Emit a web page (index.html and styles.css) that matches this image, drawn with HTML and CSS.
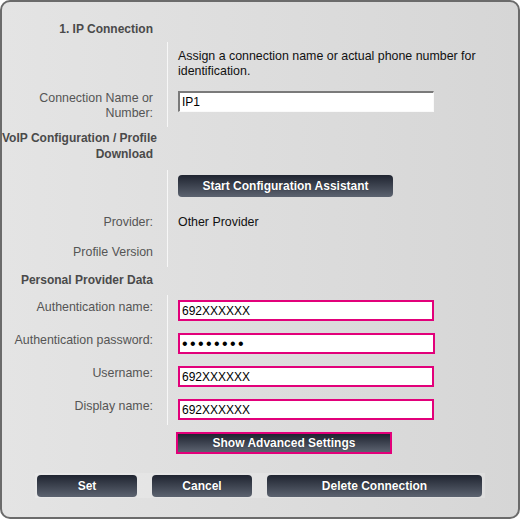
FILE: index.html
```html
<!DOCTYPE html>
<html lang="en">
<head>
    <meta charset="UTF-8">
    <title>IP Connection</title>
    <link rel="stylesheet" href="styles.css">
</head>
<body>
<div class="panel">
    <div class="row head first">
        <div class="label">1. IP Connection</div>
        <div class="field"></div>
    </div>
    <div class="row desc">
        <div class="label"></div>
        <div class="field line">Assign a connection name or actual phone number for identification.</div>
    </div>
    <div class="row name">
        <div class="label">Connection Name or<br>Number:</div>
        <div class="field line"><input class="plain" type="text" value="IP1"></div>
    </div>
    <div class="row head voip">
        <div class="label">VoIP Configuration / Profile<br>Download</div>
        <div class="field"></div>
    </div>
    <div class="row assist">
        <div class="label"></div>
        <div class="field line"><button class="btn wide">Start Configuration Assistant</button></div>
    </div>
    <div class="row text provider">
        <div class="label">Provider:</div>
        <div class="field line">Other Provider</div>
    </div>
    <div class="row text version">
        <div class="label">Profile Version</div>
        <div class="field line"></div>
    </div>
    <div class="row head personal">
        <div class="label">Personal Provider Data</div>
        <div class="field"></div>
    </div>
    <div class="row entry">
        <div class="label">Authentication name:</div>
        <div class="field line"><input class="mark" type="text" value="692XXXXXX"></div>
    </div>
    <div class="row entry">
        <div class="label">Authentication password:</div>
        <div class="field line"><input class="mark pass" type="password" value="12345678"></div>
    </div>
    <div class="row entry">
        <div class="label">Username:</div>
        <div class="field line"><input class="mark" type="text" value="692XXXXXX"></div>
    </div>
    <div class="row entry last">
        <div class="label">Display name:</div>
        <div class="field line"><input class="mark" type="text" value="692XXXXXX"></div>
    </div>
    <div class="row advanced">
        <div class="label"></div>
        <div class="field"><button class="btn wide outline">Show Advanced Settings</button></div>
    </div>
    <div class="footer">
        <button class="btn small">Set</button>
        <button class="btn small">Cancel</button>
        <button class="btn wide">Delete Connection</button>
    </div>
</div>
</body>
</html>
```

FILE: styles.css
```css
body {
    margin: 0;
    font-family: "Liberation Sans", Arial, sans-serif;
    font-size: 12.4px;
}

.panel {
    width: 520px;
    height: 519px;
    box-sizing: border-box;
    border: 2px solid #6b6b6b;
    border-radius: 10px;
    background: linear-gradient(to right, #e4e4e4, #d6d6d6);
    overflow: hidden;
}

.row {
    display: grid;
    grid-template-columns: 165px 1fr;
    line-height: 15px;
}

.label {
    padding-right: 14px;
    text-align: right;
    white-space: nowrap;
    color: #555;
}

.field {
    padding: 0 20px 0 10px;
    color: #111;
}

.field.line {
    border-left: 1px solid #f7f7f7;
}

.head .label {
    font-size: 12px;
    font-weight: bold;
    color: #4a4a4a;
}

.first .label {
    padding-top: 20px;
    padding-bottom: 5px;
}

.desc .field {
    padding-top: 7px;
    padding-bottom: 11px;
}

.name .label {
    padding-top: 1px;
    padding-bottom: 6px;
}

.name .field {
    padding-top: 1px;
}

.voip {
    line-height: 16px;
}

.voip .label {
    padding-top: 3px;
    padding-bottom: 8px;
}

.assist .field {
    padding-top: 5px;
    padding-bottom: 8px;
}

.provider .label,
.provider .field {
    padding-top: 10px;
    padding-bottom: 7px;
}

.version .label,
.version .field {
    padding-top: 8px;
    padding-bottom: 7px;
}

.personal .label {
    padding-top: 6px;
    padding-bottom: 7px;
}

.entry .label {
    padding-top: 5px;
}

.entry .field {
    padding-top: 5px;
    padding-bottom: 7px;
}

.entry.last .field {
    padding-bottom: 5px;
}

.advanced .field {
    padding-top: 7px;
    padding-left: 9px;
}

input {
    display: block;
    box-sizing: border-box;
    width: 256px;
    height: 21px;
    margin: 0;
    padding: 0 2px;
    font-family: "Liberation Sans", Arial, sans-serif;
    font-size: 12px;
    color: #000;
    background: #fff;
    outline: none;
}

input.plain {
    border-style: solid;
    border-width: 2px 1px 1px 2px;
    border-color: #7a7a7a #fafafa #fafafa #7a7a7a;
}

input.mark {
    border: 2px solid #e2007a;
}

input.pass {
    width: 257px;
    font-size: 16px;
    letter-spacing: 2.4px;
}

.btn {
    display: block;
    box-sizing: border-box;
    height: 22px;
    padding: 0;
    border: 0;
    border-radius: 4px;
    background: linear-gradient(#1f2430, #5c6370);
    color: #fff;
    font-family: "Liberation Sans", Arial, sans-serif;
    font-size: 12px;
    font-weight: bold;
    text-shadow: 0 0 1px rgba(0, 0, 0, 0.6);
}

.btn.wide {
    width: 215px;
}

.btn.small {
    width: 100px;
}

.btn.outline {
    width: 216px;
    border: 2px solid #e2007a;
    border-radius: 0;
}

.footer {
    display: flex;
    gap: 15px;
    width: 446px;
    margin: 19px 0 0 33px;
    padding: 2px 2px 1px 2px;
    background: rgba(255, 255, 255, 0.18);
}
```
